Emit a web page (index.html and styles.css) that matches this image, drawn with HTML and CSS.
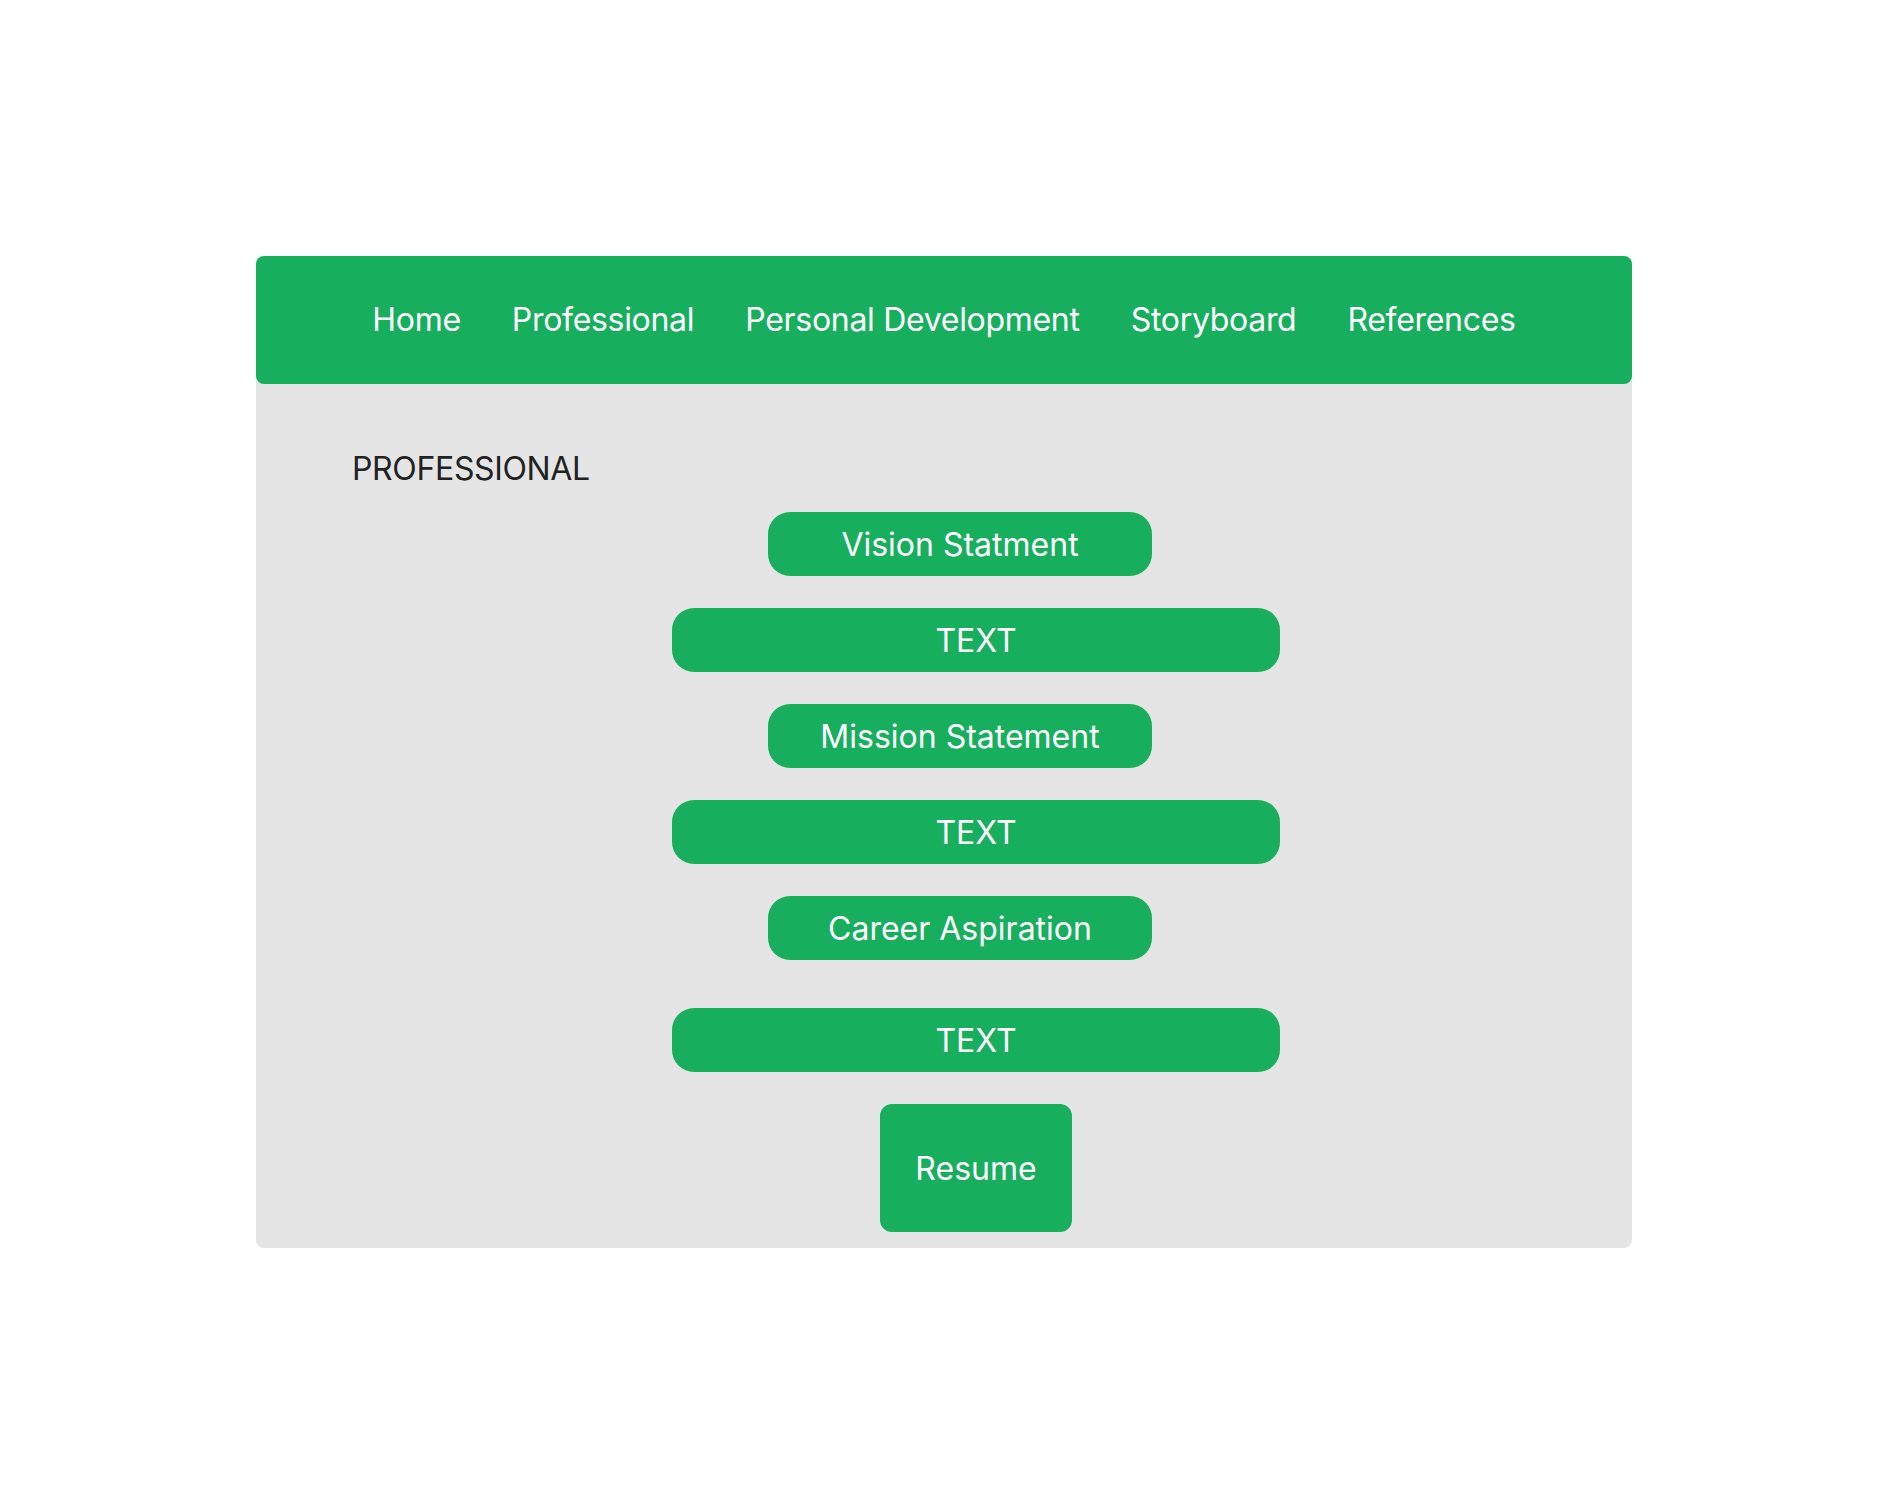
FILE: index.html
```html
<!DOCTYPE html>
<html lang="en">
<head>
<meta charset="utf-8">
<title>Professional</title>
<link rel="stylesheet" href="styles.css">
</head>
<body>
  <main class="card">
    <header class="topbar">
      <nav class="nav">
        <a class="nav-link" href="#">Home</a>
        <a class="nav-link" href="#">Professional</a>
        <a class="nav-link" href="#">Personal Development</a>
        <a class="nav-link" href="#">Storyboard</a>
        <a class="nav-link" href="#">References</a>
      </nav>
    </header>
    <section class="content">
      <h1 class="heading">PROFESSIONAL</h1>
      <div class="stack">
        <div class="pill pill-short">Vision Statment</div>
        <div class="pill pill-long">TEXT</div>
        <div class="pill pill-short">Mission Statement</div>
        <div class="pill pill-long">TEXT</div>
        <div class="pill pill-short">Career Aspiration</div>
        <div class="pill pill-long pill-spaced">TEXT</div>
        <div class="resume">Resume</div>
      </div>
    </section>
  </main>
</body>
</html>
```

FILE: styles.css
```css
* { box-sizing: border-box; }

html, body {
  margin: 0;
  padding: 0;
  background: #ffffff;
}

body {
  font-family: Inter, "Noto Sans", sans-serif;
  padding: 256px 0 0 256px;
}

.card {
  width: 1376px;
  background: #e5e5e5;
  border-radius: 8px;
}

.topbar {
  height: 128px;
  background: #17af5e;
  border-radius: 8px;
  display: flex;
  align-items: center;
  justify-content: center;
}

.nav {
  display: flex;
  gap: 51px;
}

.nav-link {
  color: #ffffff;
  text-decoration: none;
  font-size: 32px;
  line-height: 40px;
  letter-spacing: -0.3px;
}

.content {
  padding: 65px 96px 16px 96px;
}

.heading {
  margin: 0;
  font-size: 32px;
  line-height: 40px;
  font-weight: 400;
  letter-spacing: -0.35px;
  color: #222222;
}

.stack {
  margin: 23px 0 0 320px;
  width: 608px;
  display: flex;
  flex-direction: column;
  align-items: center;
  gap: 32px;
}

.pill {
  height: 64px;
  background: #17af5e;
  color: #ffffff;
  border-radius: 22px;
  display: flex;
  align-items: center;
  justify-content: center;
  font-size: 32px;
}

.pill-short {
  width: 384px;
  margin-right: 32px;
}

.pill-long {
  width: 608px;
}

.pill-spaced {
  margin-top: 16px;
}

.resume {
  width: 192px;
  height: 128px;
  background: #17af5e;
  color: #ffffff;
  border-radius: 12px;
  display: flex;
  align-items: center;
  justify-content: center;
  font-size: 32px;
}
```
